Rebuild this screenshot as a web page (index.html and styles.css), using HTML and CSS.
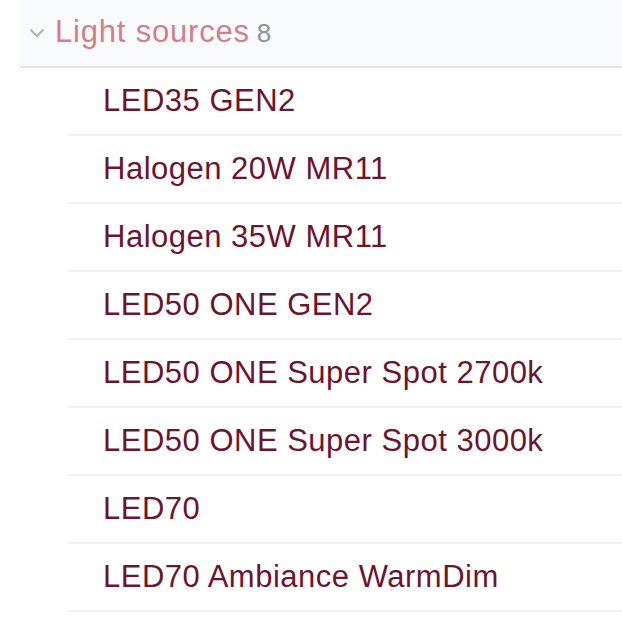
FILE: index.html
```html
<!DOCTYPE html>
<html>
<head>
<meta charset="utf-8">
<link rel="stylesheet" href="styles.css">
</head>
<body>
<div class="group">
  <div class="group-header">
    <svg class="chevron" width="16" height="10" viewBox="0 0 16 10"><path d="M1.5 1.5 L8 8 L14.5 1.5" fill="none" stroke="#b3b3b3" stroke-width="2"/></svg>
    <span class="title">Light sources</span>
    <span class="count">8</span>
  </div>
  <ul class="items">
    <li class="item">LED35 GEN2</li>
    <li class="item">Halogen 20W MR11</li>
    <li class="item">Halogen 35W MR11</li>
    <li class="item">LED50 ONE GEN2</li>
    <li class="item">LED50 ONE Super Spot 2700k</li>
    <li class="item">LED50 ONE Super Spot 3000k</li>
    <li class="item">LED70</li>
    <li class="item">LED70 Ambiance WarmDim</li>
  </ul>
</div>
</body>
</html>
```
FILE: styles.css
```css
html, body {
  margin: 0;
  padding: 0;
  background: #ffffff;
  font-family: "Liberation Sans", Arial, sans-serif;
}
.group {
  margin-left: 20px;
}
.group-header {
  height: 68px;
  box-sizing: border-box;
  background: #f9fafc;
  border-bottom: 2px solid #e4e4e4;
  display: flex;
  align-items: center;
  padding-left: 9px;
  padding-bottom: 3px;
}
.chevron {
  flex: none;
  margin-top: 3px;
}
.title {
  margin-left: 10px;
  font-size: 31px;
  letter-spacing: 0.8px;
  color: #d27e8b;
}
.count {
  margin-left: 7px;
  font-size: 26px;
  color: #8a92a0;
  margin-top: 3px;
}
.items {
  list-style: none;
  margin: 0 0 0 48px;
  padding: 0;
}
.item {
  height: 68px;
  box-sizing: border-box;
  border-bottom: 2px solid #f1f1f1;
  display: flex;
  align-items: center;
  padding-left: 35px;
  font-size: 31px;
  letter-spacing: 0.5px;
  color: #6e1430;
}
```
